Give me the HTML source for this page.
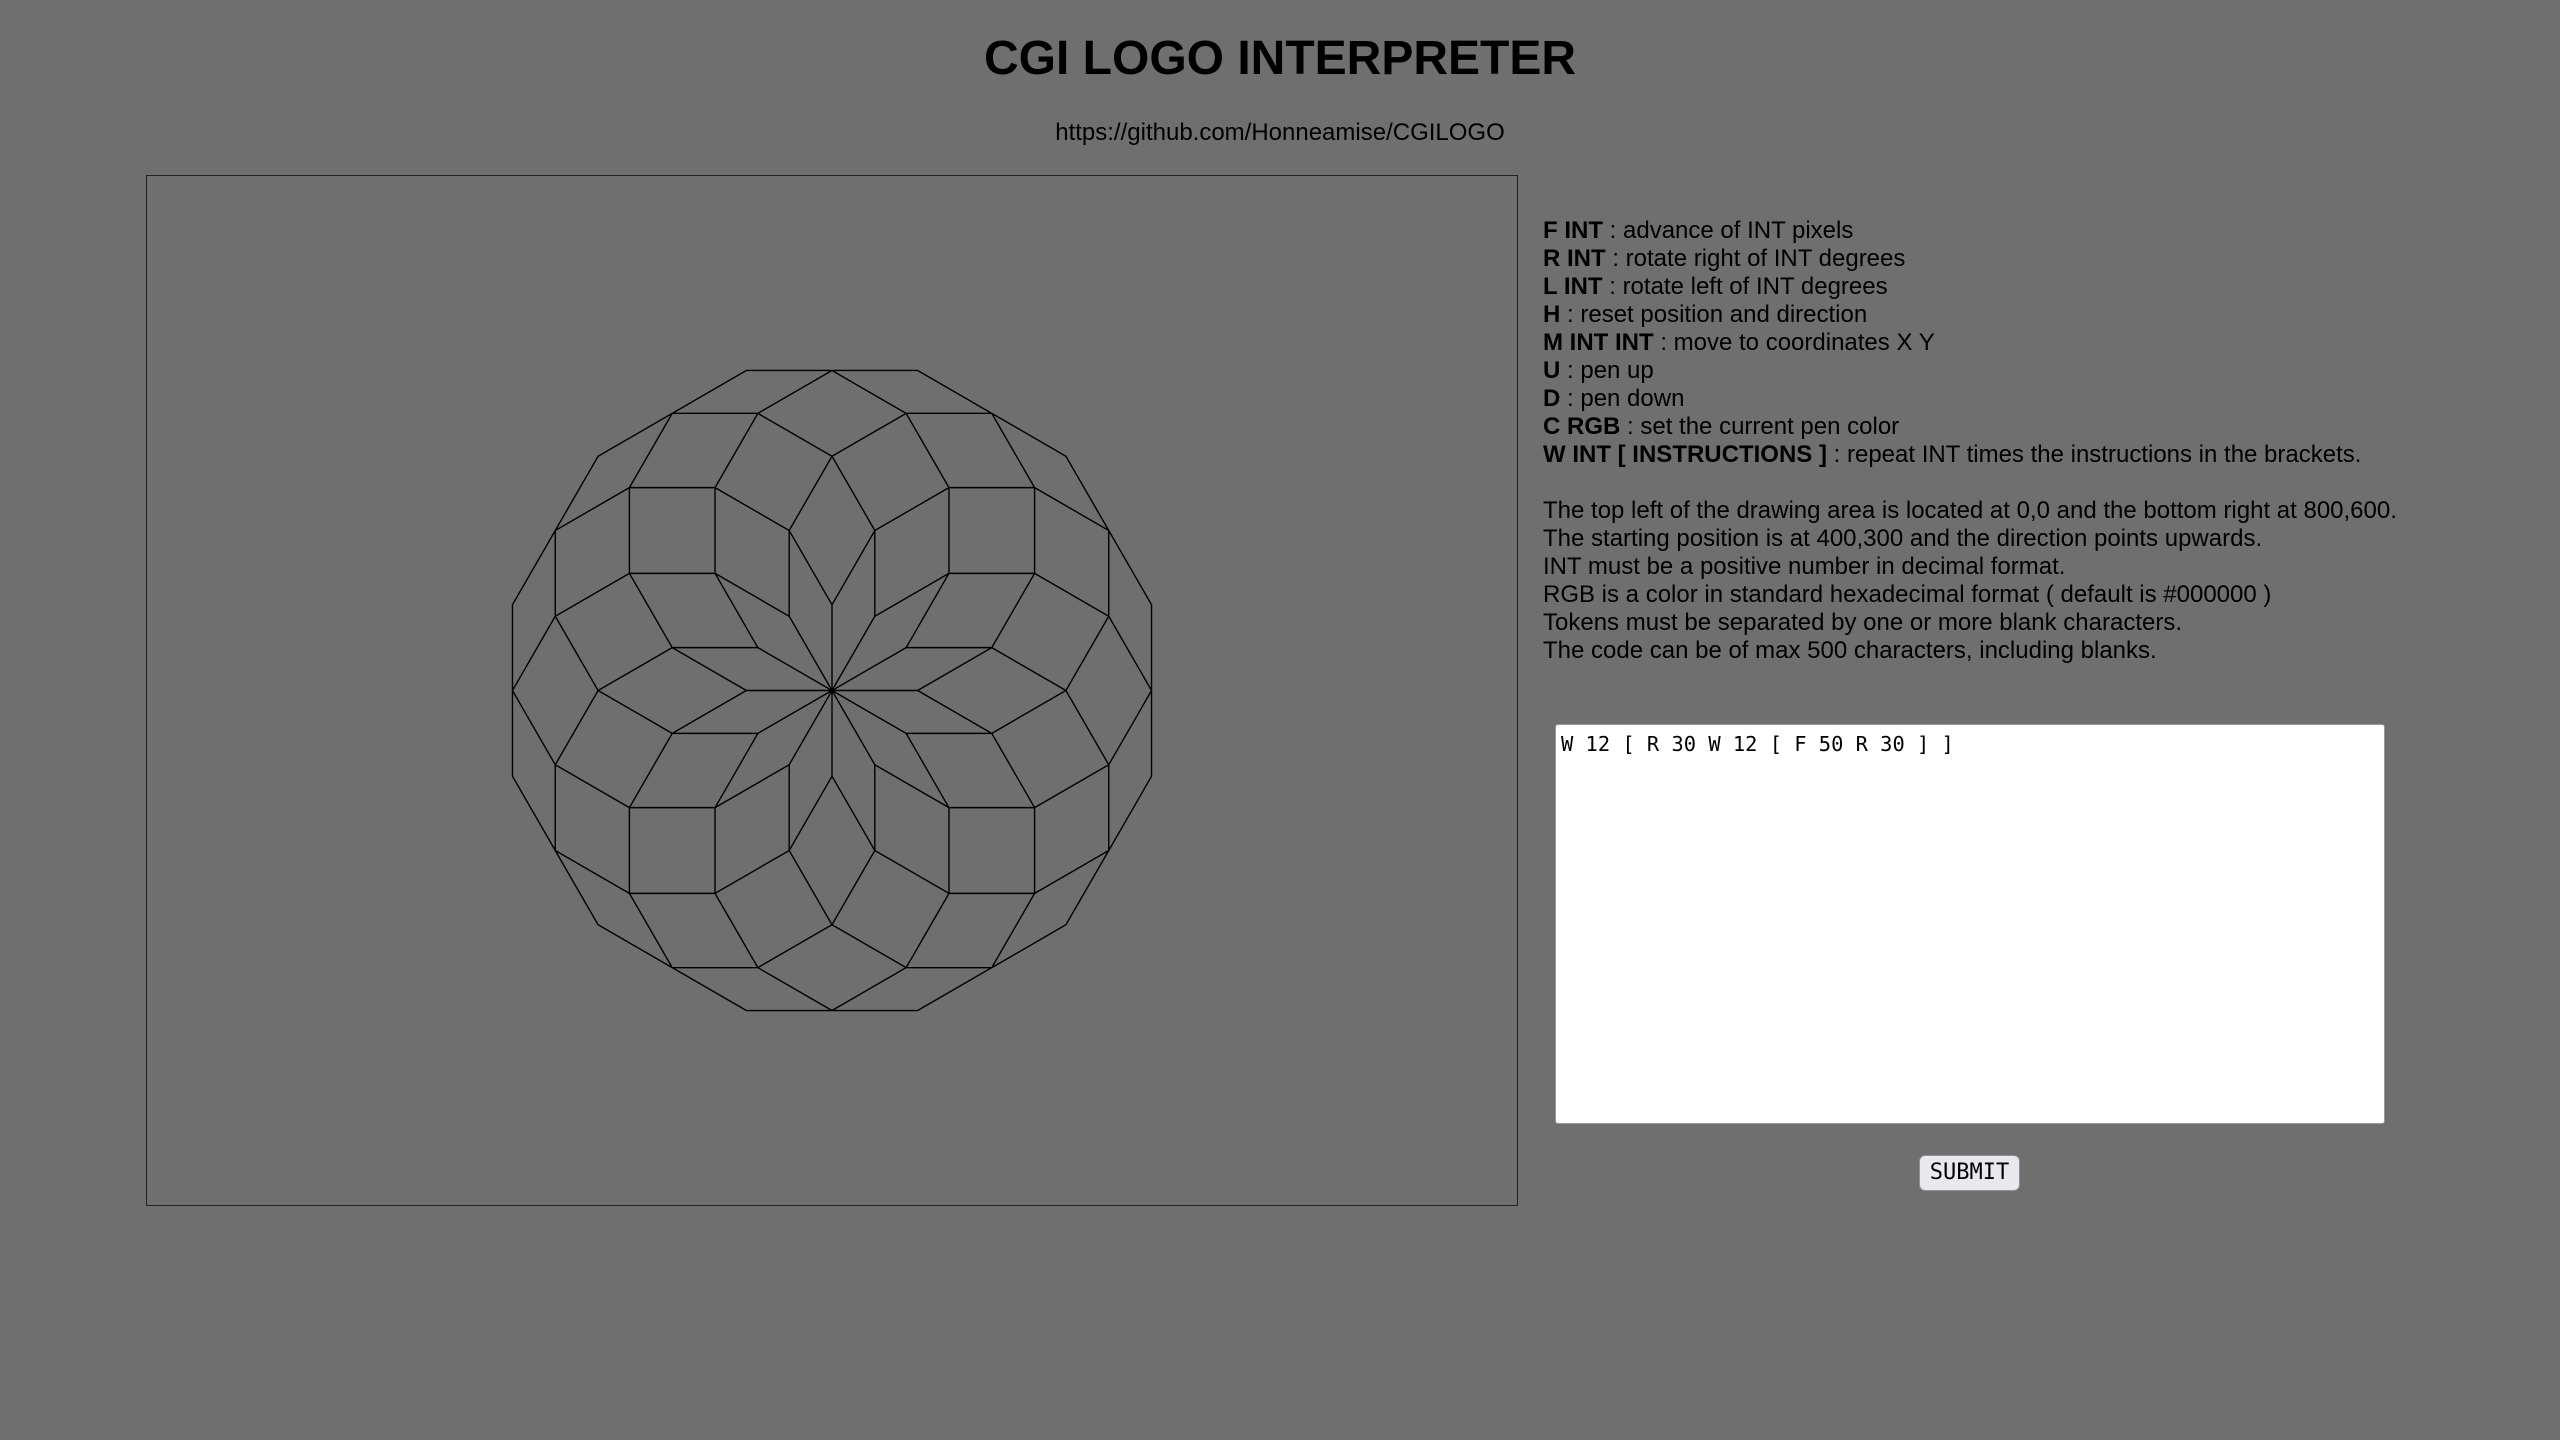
<!DOCTYPE html>
<html><head><meta charset="utf-8">
<style>
html,body{margin:0;padding:0}
body{width:2560px;height:1440px;background:#6f6f6f;position:relative;overflow:hidden;font-family:"Liberation Sans",Arial,sans-serif;color:#000}
h1{position:absolute;top:29px;left:0;width:2560px;text-align:center;margin:0;font-size:48px;font-weight:bold;line-height:60px}
.link{position:absolute;top:117px;left:0;width:2560px;text-align:center;font-size:24px;line-height:32px}
#cv{position:absolute;left:146px;top:175px;width:1372px;height:1031px;border:1.5px solid #222;box-sizing:border-box}
#cv svg{position:absolute;left:0;top:0;width:100%;height:100%}
.help{position:absolute;left:1543px;top:217px;font-size:24px;line-height:28px;white-space:nowrap}
.ta{position:absolute;left:1555px;top:724px;width:830px;height:400px;background:#fff;border-radius:3px;border:1px solid #999;box-sizing:border-box;font-family:"DejaVu Sans Mono",monospace;font-size:20.4px;padding:4px 5px;line-height:30px;white-space:pre}
.btn{position:absolute;left:1919px;top:1155px;width:101px;height:36px;background:#e9e9ed;border:1px solid #8f8f9d;border-radius:6px;box-sizing:border-box;font-family:"DejaVu Sans Mono",monospace;font-size:22px;text-align:center;line-height:34px}
</style></head><body>
<h1>CGI LOGO INTERPRETER</h1>
<div class="link">https://github.com/Honneamise/CGILOGO</div>
<div id="cv"><svg viewBox="0 0 800 600" preserveAspectRatio="none"><path id="p" d="" fill="none" stroke="#000" stroke-width="1.4" vector-effect="non-scaling-stroke"/></svg></div>
<div class="help">
<b>F INT</b> : advance of INT pixels<br>
<b>R INT</b> : rotate right of INT degrees<br>
<b>L INT</b> : rotate left of INT degrees<br>
<b>H</b> : reset position and direction<br>
<b>M INT INT</b> : move to coordinates X Y<br>
<b>U</b> : pen up<br>
<b>D</b> : pen down<br>
<b>C RGB</b> : set the current pen color<br>
<b>W INT [ INSTRUCTIONS ]</b> : repeat INT times the instructions in the brackets.<br>
<br>
The top left of the drawing area is located at 0,0 and the bottom right at 800,600.<br>
The starting position is at 400,300 and the direction points upwards.<br>
INT must be a positive number in decimal format.<br>
RGB is a color in standard hexadecimal format ( default is #000000 )<br>
Tokens must be separated by one or more blank characters.<br>
The code can be of max 500 characters, including blanks.
</div>
<div class="ta">W 12 [ R 30 W 12 [ F 50 R 30 ] ]</div>
<div class="btn">SUBMIT</div>
<script>
var x=400,y=300,a=0,d="M400 300";
for(var i=0;i<12;i++){a+=30;for(var j=0;j<12;j++){var r=a*Math.PI/180;x+=50*Math.sin(r);y-=50*Math.cos(r);d+=" L"+x.toFixed(2)+" "+y.toFixed(2);a+=30;}}
document.getElementById("p").setAttribute("d",d);
</script>
</body></html>
